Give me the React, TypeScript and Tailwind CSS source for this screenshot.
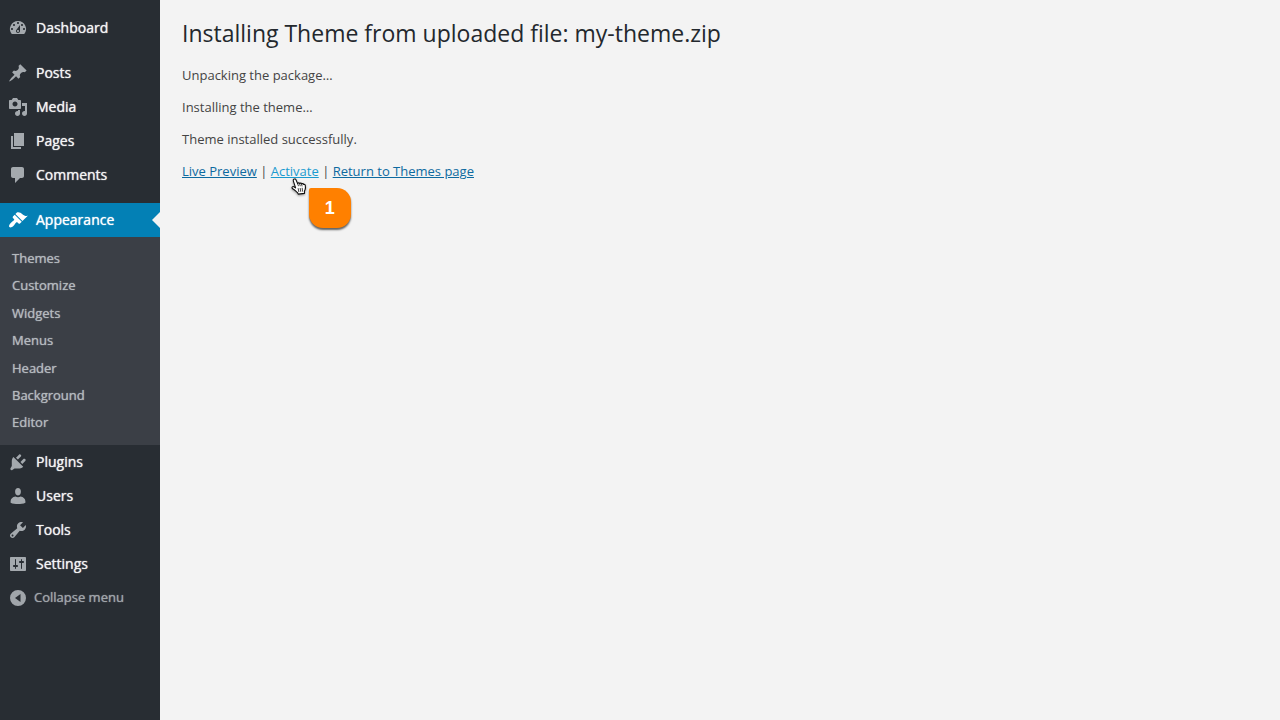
import type { ReactNode } from "react";

const icons = {
  dashboard:
    "M3.76 16h12.48A7.998 7.998 0 0 0 10 3a7.998 7.998 0 0 0-6.24 13zM10 4c.55 0 1 .45 1 1s-.45 1-1 1-1-.45-1-1 .45-1 1-1zM6 6c.55 0 1 .45 1 1s-.45 1-1 1-1-.45-1-1 .45-1 1-1zm8 0c.55 0 1 .45 1 1s-.45 1-1 1-1-.45-1-1 .45-1 1-1zm-5.37 5.55L12 7v6c0 1.1-.9 2-2 2s-2-.9-2-2c0-.57.24-1.08.63-1.45zM4 10c.55 0 1 .45 1 1s-.45 1-1 1-1-.45-1-1 .45-1 1-1zm12 0c.55 0 1 .45 1 1s-.45 1-1 1-1-.45-1-1 .45-1 1-1zm-5 3c0-.55-.45-1-1-1s-1 .45-1 1 .45 1 1 1 1-.45 1-1z",
  posts:
    "M10.44 3.02l1.82-1.82 6.36 6.35-1.83 1.82c-1.05-.68-2.48-.57-3.41.36l-.75.75c-.92.93-1.04 2.35-.35 3.41l-1.83 1.82-2.41-2.41-2.8 2.79c-.42.42-3.38 2.71-3.8 2.29s1.86-3.39 2.28-3.81l2.79-2.79L4.1 9.36l1.83-1.82c1.05.69 2.48.57 3.4-.36l.75-.75c.93-.92 1.05-2.35.36-3.41z",
  media:
    "M13 11V4c0-.55-.45-1-1-1h-1.67L9 1H5L3.67 3H2c-.55 0-1 .45-1 1v7c0 .55.45 1 1 1h10c.55 0 1-.45 1-1zM7 4.5c1.38 0 2.5 1.12 2.5 2.5S8.38 9.5 7 9.5 4.5 8.38 4.5 7 5.62 4.5 7 4.5zM14 6h5v10.5c0 1.38-1.12 2.5-2.5 2.5S14 17.88 14 16.5s1.12-2.5 2.5-2.5c.17 0 .34.02.5.05V9h-3V6zm-4 8.05V13h2v3.5c0 1.38-1.12 2.5-2.5 2.5S7 17.88 7 16.5 8.12 14 9.5 14c.17 0 .34.02.5.05z",
  pages: "M6 15V2h10v13H6zm-1 1h8v2H3V5h2v11z",
  comments:
    "M5 2h9c1.1 0 2 .9 2 2v7c0 1.1-.9 2-2 2h-2l-5 5v-5H5c-1.1 0-2-.9-2-2V4c0-1.1.9-2 2-2z",
  appearance:
    "M14.48 11.06L7.41 3.99l1.5-1.5c.5-.56 2.3-.47 3.51.32 1.21.8 1.43 1.28 2.91 2.1 1.18.64 2.45 1.26 4.45.85zm-.71.71L6.7 4.7 4.93 6.47c-.39.39-.39 1.02 0 1.41l1.06 1.06c.39.39.39 1.03 0 1.42-.6.6-1.43 1.11-2.21 1.69-.35.26-.7.53-1.01.84C1.43 14.23.4 16.08 1.4 17.07c.99 1 2.84-.03 4.18-1.36.31-.31.58-.66.85-1.02.57-.78 1.08-1.61 1.69-2.21.39-.39 1.02-.39 1.41 0l1.06 1.06c.39.39 1.02.39 1.41 0z",
  plugins:
    "M13.1 4.3L9.9 7.5 8 5.7l3.2-3.2c.4-.4 1.1-.2 1.600.3.5.5.6 1.100.3 1.500zM5.400 4.900l9.800 9.800c-1.500 1.400-3.100 1.900-5 1.900H6.500L4.300 18c-.9.800-2.600-.8-1.800-1.800l1.300-2.100V9.600c0-1.900.3-3.300 1.600-4.700zM12.500 10l3.100-3.200c.4-.3 1.100-.2 1.600.3.5.5.6 1.200.3 1.600l-3.200 3.200z",
  users:
    "M10 9.400c-2.200 0-2.900-2-2.900-3.900C7.100 3.400 8.200 2 10 2s2.900 1.400 2.900 3.500c0 1.900-.7 3.900-2.900 3.900zM7.500 10.400c1.500 1 3.500 1 5 0 3 .5 4.900 2.400 4.900 4.800v1.500c-2 1-4.700 1.400-7.400 1.400s-5.400-.4-7.400-1.400v-1.500c0-2.400 1.900-4.300 4.900-4.800z",
  tools:
    "M16.68 9.77c-1.34 1.34-3.3 1.67-4.95.99l-5.41 6.52c-.99.99-2.59.99-3.58 0s-.99-2.59 0-3.57l6.52-5.42c-.68-1.65-.35-3.61.99-4.95 1.28-1.28 3.12-1.62 4.72-1.06l-2.89 2.89 2.82 2.82 2.86-2.87c.53 1.58.18 3.39-1.08 4.65zM3.81 16.21c.4.39 1.04.39 1.43 0 .4-.4.4-1.04 0-1.43-.39-.4-1.03-.4-1.43 0-.39.39-.39 1.03 0 1.43z",
  settings:
    "M18 16V4c0-.55-.45-1-1-1H3c-.55 0-1 .45-1 1v12c0 .55.45 1 1 1h14c.55 0 1-.45 1-1zM8 11h1c.55 0 1 .45 1 1s-.45 1-1 1H8v1.5c0 .28-.22.5-.5.5s-.5-.22-.5-.5V13H6c-.55 0-1-.45-1-1s.45-1 1-1h1V5.5c0-.28.22-.5.5-.5s.5.22.5.5V11zm5-2h-1c-.55 0-1-.45-1-1s.45-1 1-1h1V5.5c0-.28.22-.5.5-.5s.5.22.5.5V7h1c.55 0 1 .45 1 1s-.45 1-1 1h-1v5.5c0 .28-.22.5-.5.5s-.5-.22-.5-.5V9z",
  collapse:
    "M10 2a8 8 0 1 0 0 16 8 8 0 0 0 0-16zM12.5 6v8L7 10z",
};

type IconName = keyof typeof icons;

function Icon({ name }: { name: IconName }) {
  return (
    <svg viewBox="0 0 20 20" className="size-5 shrink-0" fill="currentColor" fillRule="evenodd" aria-hidden="true">
      <path d={icons[name]} />
    </svg>
  );
}

function MenuItem({ icon, children }: { icon: IconName; children: ReactNode }) {
  return (
    <li>
      <a href="#" className="flex h-[34px] items-center gap-2 pl-2 text-[#a4a9ae]">
        <Icon name={icon} />
        <span className="text-sm text-[#f4f4f4]">{children}</span>
      </a>
    </li>
  );
}

const submenu = ["Themes", "Customize", "Widgets", "Menus", "Header", "Background", "Editor"];

function Sidebar() {
  return (
    <nav aria-label="Main menu" className="w-40 shrink-0 bg-[#282d33] pt-[11px] [text-shadow:0_0_1px_currentColor]">
      <ul className="pb-[11px]">
        <MenuItem icon="dashboard">Dashboard</MenuItem>
      </ul>
      <ul className="pb-[11px]">
        <MenuItem icon="posts">Posts</MenuItem>
        <MenuItem icon="media">Media</MenuItem>
        <MenuItem icon="pages">Pages</MenuItem>
        <MenuItem icon="comments">Comments</MenuItem>
      </ul>
      <ul>
        <li>
          <a href="#" aria-current="page" className="flex h-[34px] items-center gap-2 bg-[#0380b5] pl-2 text-white">
            <Icon name="appearance" />
            <span className="grow text-sm">Appearance</span>
            <svg viewBox="0 0 8 16" className="h-4 w-2" fill="#f3f3f3" aria-hidden="true">
              <path d="M8 0v16L0 8z" />
            </svg>
          </a>
          <ul className="flex h-52 flex-col bg-[#3b3f46] py-2 text-[13px] text-[#b4b9be]">
            {submenu.map((item) => (
              <li key={item} className="flex flex-1 items-center pl-3">
                <a href="#">{item}</a>
              </li>
            ))}
          </ul>
        </li>
        <MenuItem icon="plugins">Plugins</MenuItem>
        <MenuItem icon="users">Users</MenuItem>
        <MenuItem icon="tools">Tools</MenuItem>
        <MenuItem icon="settings">Settings</MenuItem>
      </ul>
      <button type="button" className="flex h-[34px] w-full items-center gap-1.5 pl-2 text-[13px] text-[#a0a5aa] [text-shadow:inherit]">
        <Icon name="collapse" />
        Collapse menu
      </button>
    </nav>
  );
}

function Pointer() {
  return (
    <svg viewBox="0 0 16 18" className="absolute left-5 top-4 h-[18px] w-4 drop-shadow-[0_1px_1px_rgba(0,0,0,0.4)]" aria-hidden="true">
      <path
        d="M3.1 1.1c.9-.4 1.7.1 2 .9l1.5 3.6c.4-.9 1.6-.9 2 0 .5-.7 1.7-.6 2 .3.7-.6 1.8-.3 2.1.6.7-.3 1.4.1 1.6.9.3 1.5.2 2.9-.2 4.2l-.7 1.7.1 2.1-6.3.7-.6-1.5C5 13.4 3.7 11.8 2 10.9 1.1 10.4.7 9.6 1.2 9c.8-.9 2.2-.3 3.400.9L2.300 2.800c-.2-.7.1-1.400.8-1.700z"
        fill="#fff"
        stroke="#111"
        strokeWidth="1.1"
        strokeLinejoin="round"
      />
      <path d="M6.6 5.6l.8 2.2M8.6 5.8l.6 2M10.6 6.2l.4 1.8M7.2 10.6l.6 3M9.2 10.4l.5 3M11.2 10.2l.3 3" fill="none" stroke="#111" strokeWidth="0.8" strokeLinecap="round" />
    </svg>
  );
}

export default function App() {
  return (
    <div className="flex min-h-screen bg-[#f3f3f3] font-['Open_Sans',sans-serif]">
      <Sidebar />
      <main className="min-w-0 grow pl-[22px] pr-5 pt-[17px] text-[13px] leading-5 text-[#444444]">
        <h1 className="mb-4 text-[23px] leading-8 text-[#23282d]">
          Installing Theme from uploaded file: my-theme.zip
        </h1>
        <div className="flex flex-col gap-3">
          <p>Unpacking the package…</p>
          <p>Installing the theme…</p>
          <p>Theme installed successfully.</p>
          <p>
            <a href="#" className="text-[#0d6aa0] underline">Live Preview</a>
            {" | "}
            <span className="relative">
              <a href="#" className="text-[#1a9bd0] underline">Activate</a>
              <Pointer />
              <span className="absolute left-[38px] top-[26px] flex h-10 w-[42px] items-center justify-center rounded-[14px] rounded-tl-[2px] bg-[#ff8000] font-['Liberation_Sans',sans-serif] text-lg font-bold text-white shadow-[0_2px_2px_rgba(0,0,0,0.6)]">
                1
              </span>
            </span>
            {" | "}
            <a href="#" className="text-[#0d6aa0] underline">Return to Themes page</a>
          </p>
        </div>
      </main>
    </div>
  );
}
